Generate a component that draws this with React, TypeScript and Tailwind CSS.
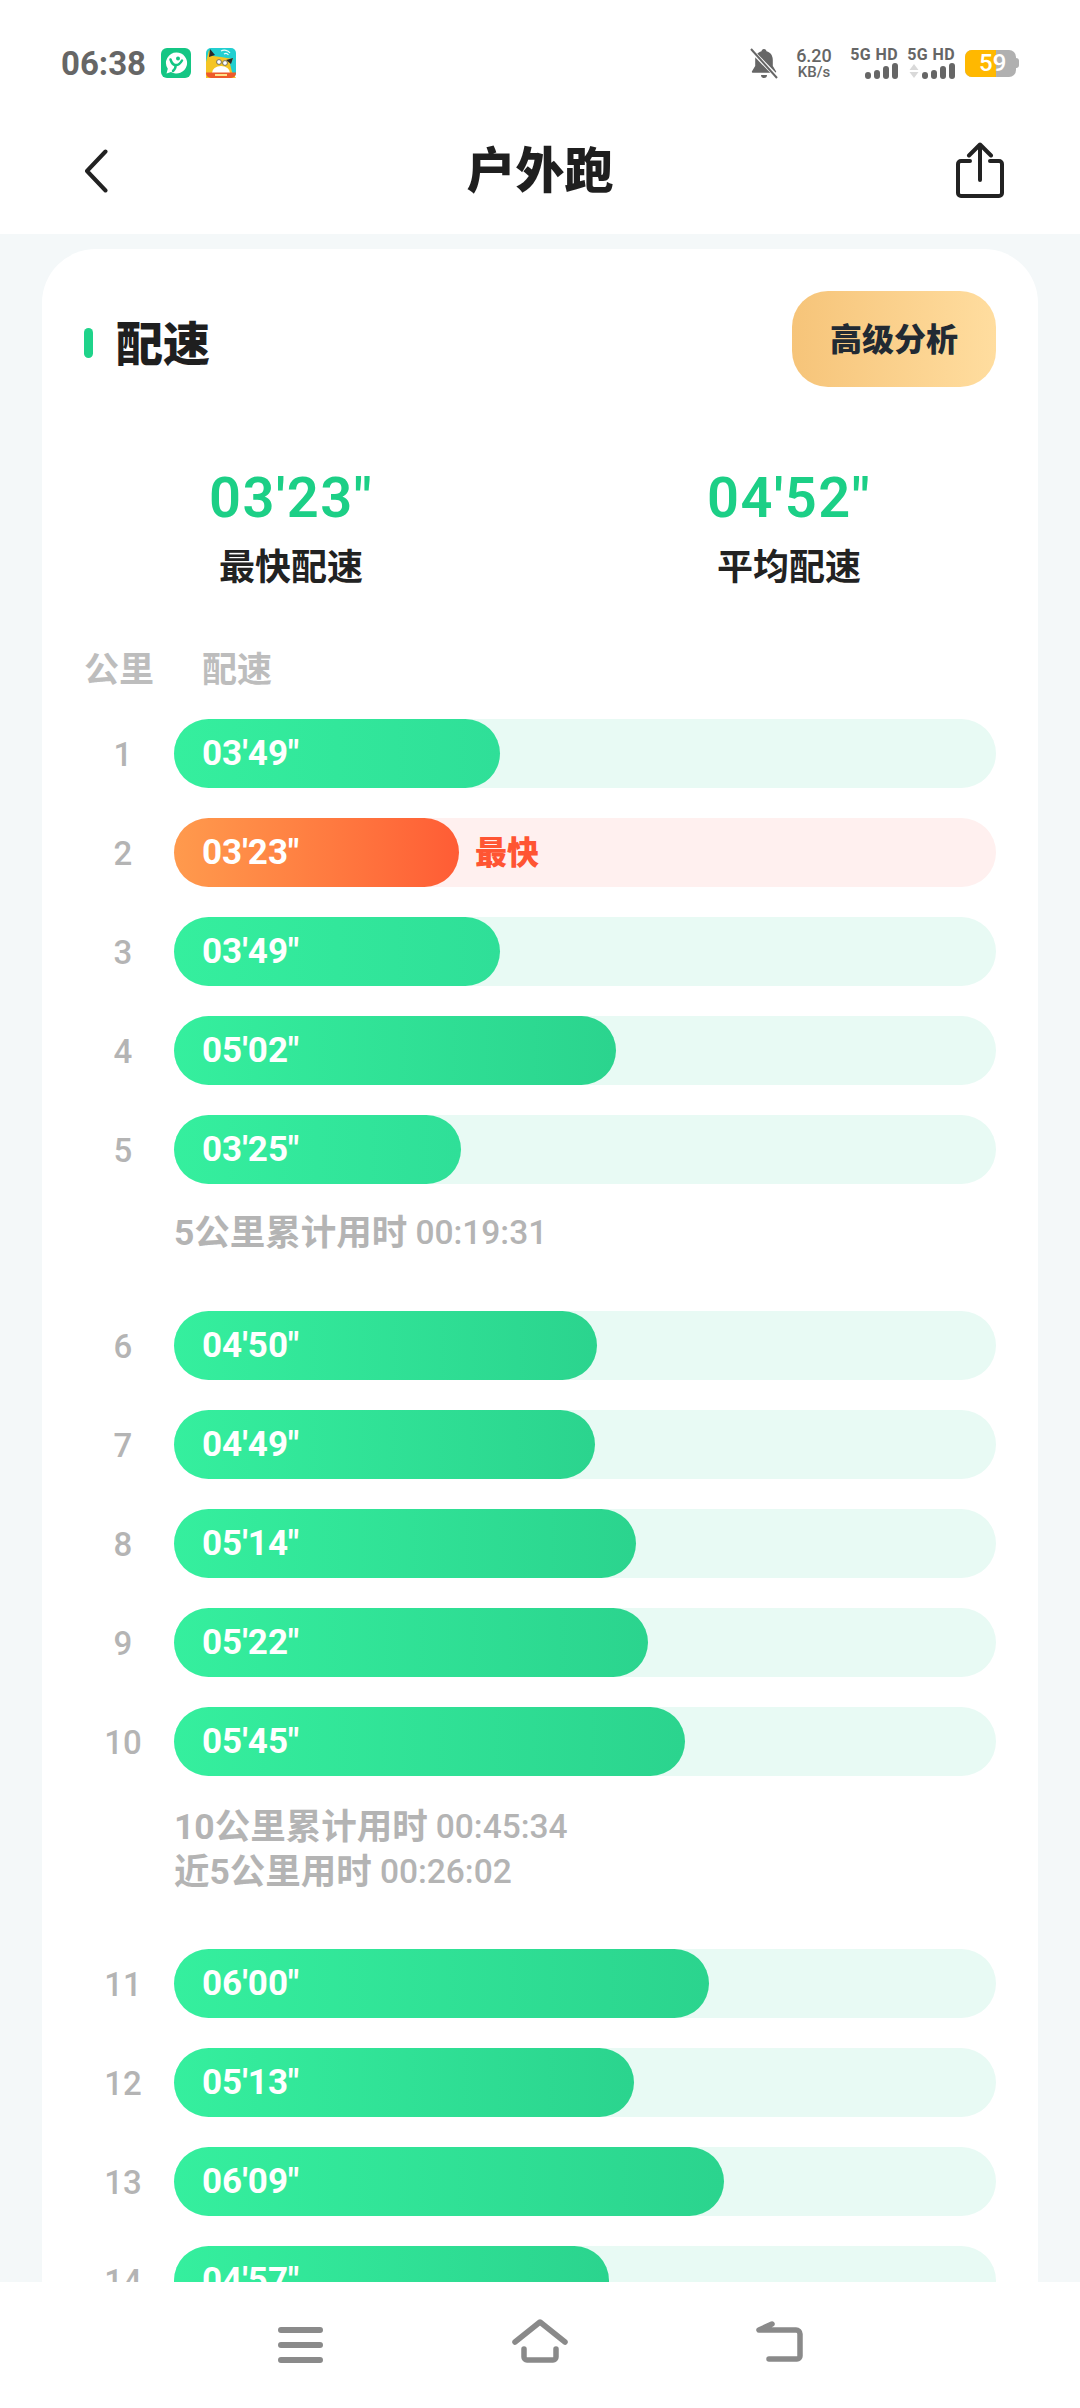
const GROUP_A = [
  { km: '1', pace: `03'49"`, right: 500 },
  { km: '2', pace: `03'23"`, right: 459, fastest: true },
  { km: '3', pace: `03'49"`, right: 500 },
  { km: '4', pace: `05'02"`, right: 616 },
  { km: '5', pace: `03'25"`, right: 461 },
];
const GROUP_B = [
  { km: '6', pace: `04'50"`, right: 597 },
  { km: '7', pace: `04'49"`, right: 595 },
  { km: '8', pace: `05'14"`, right: 636 },
  { km: '9', pace: `05'22"`, right: 648 },
  { km: '10', pace: `05'45"`, right: 685 },
];
const GROUP_C = [
  { km: '11', pace: `06'00"`, right: 709 },
  { km: '12', pace: `05'13"`, right: 634 },
  { km: '13', pace: `06'09"`, right: 724 },
  { km: '14', pace: `04'57"`, right: 609 },
];

type Split = { km: string; pace: string; right: number; fastest?: boolean };

function SplitRow({ km, pace, right, fastest }: Split) {
  // bars start at x=174 in the picture, data holds the right edge
  const width = right - 174;
  const fill = fastest
    ? 'from-[#ff9a4d] to-[#ff5c35]'
    : width > 420
      ? 'from-[#35ef9e] to-[#2bd48e]'
      : 'from-[#35ef9e] to-[#2fdf98]';
  return (
    <div className="flex items-center">
      <div className="w-[78px] pt-[2px] text-center text-[33px] font-medium text-[#b4b4b4]">{km}</div>
      <div className={`ml-3 flex h-[69px] flex-1 items-center rounded-full ${fastest ? 'bg-[#fff0ef]' : 'bg-[#e8faf4]'}`}>
        <div
          className={`flex h-full items-center rounded-full bg-gradient-to-r pl-[28px] pt-[2px] text-[35px] font-bold text-white ${fill}`}
          style={{ width }}
        >
          {pace}
        </div>
        {fastest && <span className="ml-4 text-[32px] font-black text-[#ff5533]">最快</span>}
      </div>
    </div>
  );
}

function Note({ label, time }: { label: string; time: string }) {
  return (
    <div className="flex h-[45px] items-center pl-[90px] text-[35.5px] font-bold text-[#b4b4b4]">
      <span>{label}</span>
      <span className="ml-2 text-[33.5px] font-medium">{time}</span>
    </div>
  );
}

function SignalGroup({ arrows }: { arrows?: boolean }) {
  return (
    <div className={`flex w-[48px] flex-col items-end ${arrows ? 'ml-[9px]' : 'ml-[17px]'}`}>
      <span className="text-[16px] font-bold leading-[16px] tracking-[0.4px] whitespace-nowrap">5G HD</span>
      <div className="flex h-[16px] items-end">
        {arrows && (
          <svg className="mr-[3px]" width="10" height="16" viewBox="0 0 10 16">
            <path d="M5 1l4.500 6h-9zM5 15L.5 9h9z" fill="#d9d9d9" />
          </svg>
        )}
        <div className="flex items-end gap-[3px]">
          <div className="h-[7px] w-[6px] rounded-full bg-[#666666]" />
          <div className="h-[9px] w-[6px] rounded-full bg-[#666666]" />
          <div className="h-[13px] w-[6px] rounded-full bg-[#666666]" />
          <div className="h-[16px] w-[6px] rounded-full bg-[#666666]" />
        </div>
      </div>
    </div>
  );
}

function StatusBar() {
  return (
    <div className="flex h-[108px] items-start justify-between pl-[61px] pr-[61px] pt-[47px]">
      <div className="flex h-[32px] items-center">
        <span className="text-[33px] font-bold leading-none text-[#666666]">06:38</span>
        <svg className="ml-[15px]" width="30" height="30" viewBox="0 0 30 30">
          <rect width="30" height="30" rx="6" fill="#14c684" />
          <path d="M15.500 4.500a10.500 10.500 0 1 1-5.500 19.400L5.500 25.500l1.300-4.700A10.500 10.500 0 0 1 15.500 4.500z" fill="#fff" />
          <path d="M9.500 11.500c1 3 2 5 4.500 5.500 3 .5 5-1 7-4.500M14.500 17c.5 2-.5 4-2.500 6" stroke="#14c684" strokeWidth="2.500" fill="none" strokeLinecap="round" />
          <circle cx="17" cy="10.500" r="2" fill="#14c684" />
        </svg>
        <svg className="ml-[15px]" width="30" height="30" viewBox="0 0 30 30">
          <rect width="30" height="30" rx="5" fill="#22cfd0" />
          <path d="M0 30V14L3 2l4 6 8 1 12 2-3 5 2 8 4 6z" fill="#f4c524" />
          <path d="M3 9 4 1l5 6z" fill="#2a2a2a" />
          <path d="M20 12l7-2-2 6z" fill="#2a2a2a" />
          <circle cx="13" cy="14" r="2.400" fill="#fff" stroke="#555" strokeWidth="0.800" />
          <circle cx="19" cy="15" r="2.400" fill="#fff" stroke="#555" strokeWidth="0.800" />
          <path d="M15 3a7 7 0 0 1 9 2M18 6a3.500 3.500 0 0 1 4.500 1" stroke="#e8fbfb" strokeWidth="1.200" fill="none" />
          <path d="M6 25a9 7 0 0 1 18 0z" fill="#fff" />
          <path d="M0 24.500h30V25a5 5 0 0 1-5 5H5a5 5 0 0 1-5-5z" fill="#ee5a2a" />
          <path d="M9 27h12" stroke="#ffe08a" strokeWidth="2" />
        </svg>
      </div>
      <div className="flex h-[32px] items-center text-[#666666]">
        <svg width="28" height="31" viewBox="0 0 28 31">
          <path d="M14 1c1.500 0 2.400 1 2.500 2.300 4 1.100 6.300 4.300 6.300 8.700v6l3.200 5.200c.4.800 0 1.600-1 1.600H3c-1 0-1.400-.8-1-1.600L5.200 18v-6c0-4.400 2.300-7.600 6.300-8.700C11.600 2 12.500 1 14 1z" fill="#666" />
          <path d="M11 27h6a3 3 0 0 1-6 0z" fill="#666" />
          <path d="M0 1l28 29" stroke="#fff" strokeWidth="4" />
          <path d="M1 1l26 29" stroke="#666" strokeWidth="2" />
        </svg>
        <div className="ml-[17px] flex w-[38px] flex-col items-center">
          <span className="text-[18px] font-medium leading-[18px]">6.20</span>
          <span className="text-[15px] font-medium leading-[15px]">KB/s</span>
        </div>
        <SignalGroup />
        <SignalGroup arrows />
        <div className="ml-[10px] flex items-center">
          <div className="flex h-[27px] w-[51px] overflow-hidden rounded-[7px] bg-[#b0b0b0]">
            <div className="w-[31px] bg-[#ffb800]" />
            <span className="-ml-[17px] text-[24px] font-medium leading-[27px] text-white">59</span>
          </div>
          <div className="h-[10px] w-[3px] rounded-r-full bg-[#b0b0b0]" />
        </div>
      </div>
    </div>
  );
}

export default function App() {
  return (
    <div className="flex h-[2408px] w-[1080px] flex-col overflow-hidden bg-white [font-family:Roboto,'Noto_Sans_CJK_SC',sans-serif]">
      <StatusBar />

      {/* Title bar */}
      <div className="grid h-[126px] grid-cols-[1fr_auto_1fr] items-center px-[76px]">
        <svg className="ml-2" width="24" height="44" viewBox="0 0 24 44">
          <path d="M21.500 2.500 3 22l18.500 19.500" stroke="#222" strokeWidth="4" fill="none" strokeLinecap="round" strokeLinejoin="round" />
        </svg>
        <div className="text-[49px] font-black leading-none text-[#1f1f1f]">户外跑</div>
        <svg className="-mt-[2px] justify-self-end" width="48" height="56" viewBox="0 0 48 56">
          <path d="M24 2.500V38M13 13.500l11-11 11 11" stroke="#222" strokeWidth="4" fill="none" strokeLinecap="round" strokeLinejoin="round" />
          <path d="M14 19H5a3 3 0 0 0-3 3v29a3 3 0 0 0 3 3h38a3 3 0 0 0 3-3V22a3 3 0 0 0-3-3h-9" stroke="#222" strokeWidth="4" fill="none" strokeLinecap="round" />
        </svg>
      </div>

      <div className="flex-1 overflow-hidden bg-[#f4f8f9] px-[42px] pt-[15px]">
        <div className="rounded-t-[54px] bg-white pb-10 pt-[42px]">
          {/* Card heading */}
          <div className="flex h-[96px] items-center justify-between px-[42px]">
            <div className="mt-2 flex items-center">
              <div className="h-[30px] w-[9px] rounded-full bg-[#1fd38a]" />
              <span className="ml-[23px] pt-[3px] text-[47px] font-black leading-none text-[#1f1f1f]">配速</span>
            </div>
            <div className="flex h-[96px] w-[204px] items-center justify-center rounded-[36px] bg-gradient-to-r from-[#f6c479] to-[#ffdd9f] pt-[2px] text-[32px] font-black text-[#222a33]">
              高级分析
            </div>
          </div>

          {/* Fastest / average */}
          <div className="mt-[81px] grid grid-cols-2 text-center">
            <div>
              <div className="h-[60px] text-[56px] font-semibold leading-[60px] tracking-[1.5px] text-[#1ccf86]">03'23"</div>
              <div className="mt-[18px] text-[36px] font-bold leading-[44px] text-[#222222]">最快配速</div>
            </div>
            <div>
              <div className="h-[60px] text-[56px] font-semibold leading-[60px] tracking-[1.5px] text-[#1ccf86]">04'52"</div>
              <div className="mt-[18px] text-[36px] font-bold leading-[44px] text-[#222222]">平均配速</div>
            </div>
          </div>

          <div className="mt-[59px] flex gap-[48px] px-[42px] text-[35px] font-bold leading-[44px] text-[#bdbdbd]">
            <span>公里</span>
            <span>配速</span>
          </div>

          <div className="mt-[26px] px-[42px]">
            <div className="flex flex-col gap-[30px]">
              {GROUP_A.map(row => <SplitRow key={row.km} {...row} />)}
            </div>
            <div className="mt-[27px]">
              <Note label="5公里累计用时" time="00:19:31" />
            </div>
            <div className="mt-[55px] flex flex-col gap-[30px]">
              {GROUP_B.map(row => <SplitRow key={row.km} {...row} />)}
            </div>
            <div className="mt-[29px]">
              <Note label="10公里累计用时" time="00:45:34" />
              <Note label="近5公里用时" time="00:26:02" />
            </div>
            <div className="mt-[54px] flex flex-col gap-[30px]">
              {GROUP_C.map(row => <SplitRow key={row.km} {...row} />)}
            </div>
          </div>
        </div>
      </div>

      {/* Bottom nav */}
      <div className="flex h-[126px] items-start justify-center bg-white pt-[37px]">
        <div className="flex w-[240px] justify-center pt-2">
          <svg width="45" height="36" viewBox="0 0 45 36">
            <path d="M3 3h39M3 18h39M3 33h39" stroke="#8a8a8a" strokeWidth="6" strokeLinecap="round" />
          </svg>
        </div>
        <div className="flex w-[240px] justify-center">
          <svg width="60" height="45" viewBox="0 0 60 45">
            <path d="M5 23 30 3l25 20" stroke="#8a8a8a" strokeWidth="5.500" fill="none" strokeLinecap="round" strokeLinejoin="round" />
            <path d="M14 30v8a3 3 0 0 0 3 3h26a3 3 0 0 0 3-3v-8" stroke="#8a8a8a" strokeWidth="5.500" fill="none" strokeLinecap="round" />
          </svg>
        </div>
        <div className="flex w-[240px] justify-center">
          <svg width="52" height="45" viewBox="0 0 52 45">
            <path d="M18 5 5 11h37a4 4 0 0 1 4 4v22a3 3 0 0 1-3 3H15" stroke="#8a8a8a" strokeWidth="5.500" fill="none" strokeLinecap="round" strokeLinejoin="round" />
          </svg>
        </div>
      </div>
    </div>
  );
}
